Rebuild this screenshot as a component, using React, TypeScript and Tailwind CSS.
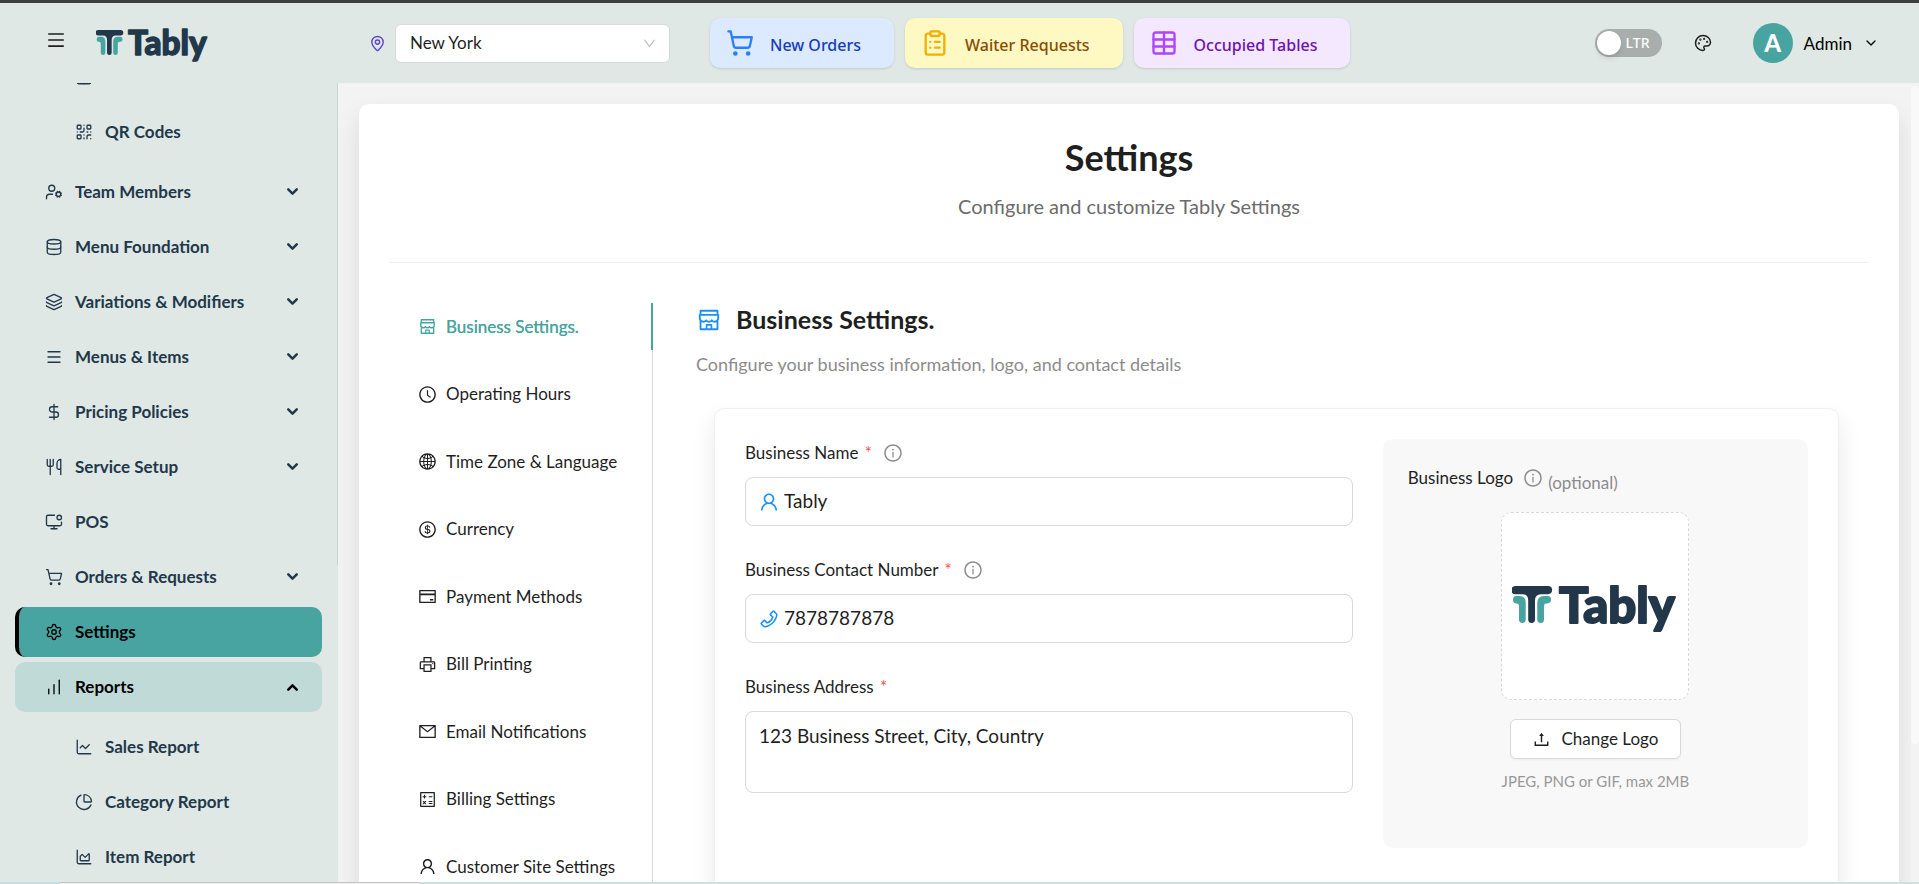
import React from "react";
import {
  ChartArea,
  ChartLine,
  ChartNoAxesColumnIncreasing,
  ChartPie,
  ChevronDown,
  ChevronUp,
  ClipboardList,
  Database,
  DollarSign,
  Layers,
  MapPin,
  Menu,
  MonitorDot,
  Palette,
  QrCode,
  Settings,
  ShoppingCart,
  Table,
  UserCog,
  Utensils,
} from "lucide-react";
import {
  AiOutlineCalculator,
  AiOutlineClockCircle,
  AiOutlineCreditCard,
  AiOutlineDollarCircle,
  AiOutlineDown,
  AiOutlineGlobal,
  AiOutlineInfoCircle,
  AiOutlineMail,
  AiOutlineMenu,
  AiOutlinePhone,
  AiOutlinePrinter,
  AiOutlineShop,
  AiOutlineUpload,
  AiOutlineUser,
} from "react-icons/ai";

type IconType = React.ComponentType<any>;

function Logo({ className }: { className: string }) {
  return (
    <svg viewBox="0 -10 166 60" className={className} role="img" aria-label="Tably">
      <path
        fill="#22384a"
        d="M3.5 0H36A3.9 3.9 0 0 1 36 8.2H29Q23 8.4 23 14.5V33.6A3.4 3.4 0 0 1 16.2 33.6V14.5Q16.2 8.4 10.5 8.2H3.5A3.9 3.9 0 0 1 3.5 0Z"
      />
      <path
        fill="#48a4a1"
        d="M4 10H7.5Q13.7 10 13.7 17V33.6A3.35 3.35 0 0 1 7 33.6V20Q7 17.6 4.5 17.6Q1 17.6 1 13.8Q1 10 4 10Z"
      />
      <path
        fill="#48a4a1"
        d="M36 10H32Q25.3 10 25.3 17V33.6A3.35 3.35 0 0 0 32 33.6V20Q32 17.6 34.5 17.6Q39 17.6 39 13.8Q39 10 36 10Z"
      />
      <text
        x="47"
        y="37"
        fontSize="49"
        fill="#22384a"
        stroke="#22384a"
        strokeWidth="2"
        strokeLinejoin="round"
        className="font-[family-name:Lato,sans-serif] font-black"
      >
        Tably
      </text>
    </svg>
  );
}

function QuickLink({ icon: Icon, label, tone, iconTone }: { icon: IconType; label: string; tone: string; iconTone: string }) {
  return (
    <button type="button" className={`flex h-[50px] items-center gap-4 rounded-[10px] pr-[33px] pl-4 shadow-sm ${tone}`}>
      <Icon size={28} strokeWidth={2} className={iconTone} />
      <span className="pt-[3px] font-[family-name:Noto_Sans,sans-serif] text-base font-medium whitespace-nowrap">{label}</span>
    </button>
  );
}

function Header() {
  return (
    <header className="relative z-10 flex h-[80px] shrink-0 items-center bg-[#dfe8e5] pr-[43px] pl-[46px]">
      <div className="flex w-[323px] items-center gap-[30px]">
        <button type="button" aria-label="Toggle menu" className="pb-[6px] text-[#1f1f1f]">
          <AiOutlineMenu size={20} />
        </button>
        <Logo className="h-[41px] w-[113px]" />
      </div>
      <label className="flex items-center gap-[9px]">
        <MapPin size={17} strokeWidth={2} className="text-[#5b45c9]" />
        <span className="grid items-center">
          <select
            aria-label="Branch"
            className="col-start-1 row-start-1 h-[39px] w-[275px] appearance-none rounded-md border border-[#d9d9d9] bg-white px-[14px] text-[17px] text-[#1f1f1f]"
          >
            <option>New York</option>
          </select>
          <AiOutlineDown size={15} className="pointer-events-none col-start-1 row-start-1 mr-[13px] justify-self-end text-[#bfbfbf]" />
        </span>
      </label>
      <nav className="ml-10 flex gap-[11px]">
        <QuickLink icon={ShoppingCart} label="New Orders" tone="bg-blue-100 text-blue-800" iconTone="text-blue-500" />
        <QuickLink icon={ClipboardList} label="Waiter Requests" tone="bg-yellow-100 text-yellow-800" iconTone="text-yellow-500" />
        <QuickLink icon={Table} label="Occupied Tables" tone="bg-purple-100 text-purple-800" iconTone="text-purple-500" />
      </nav>
      <div className="ml-auto flex items-center">
        <button type="button" role="switch" aria-checked="false" className="flex h-7 w-[67px] items-center gap-[5px] rounded-full bg-[#a7aeac] pl-[2px] text-white">
          <span className="size-6 rounded-full bg-white shadow-md" />
          <span className="font-[family-name:Noto_Sans,sans-serif] text-sm font-medium">LTR</span>
        </button>
        <button type="button" aria-label="Theme" className="ml-8 text-[#1f1f1f]">
          <Palette size={18} strokeWidth={2} />
        </button>
        <button type="button" className="ml-[41px] flex items-center gap-[11px] text-[17px] text-black">
          <span className="grid size-10 place-items-center rounded-full bg-[#48a4a1] text-[24px] font-black text-white">A</span>
          <span className="pt-[2px]">Admin</span>
          <ChevronDown size={16} strokeWidth={2} className="-mr-[3px]" />
        </button>
      </div>
    </header>
  );
}

function SideItem({ icon: Icon, label, expand, state = "", sub = false }: { icon: IconType; label: string; expand?: "up" | "down"; state?: "" | "active" | "open"; sub?: boolean }) {
  const look =
    state === "active"
      ? "border-black bg-[#48a4a1] text-black"
      : state === "open"
        ? "bg-[#c0dad7] text-black"
        : "border-transparent text-[#22384a]";
  const edge = state === "open" ? "pl-[30px]" : "border-l-4 pl-[26px]";
  return (
    <li>
      <a href="#" className={`flex h-[50px] items-center gap-3 rounded-[10px] pr-[21px] ${sub ? "pl-[60px]" : edge} ${look}`}>
        <Icon size={18} strokeWidth={1.75} />
        <span className="text-[17px] font-bold whitespace-nowrap">{label}</span>
        {expand === "down" && <ChevronDown size={17} strokeWidth={3.5} className="mb-[2px] ml-auto" />}
        {expand === "up" && <ChevronUp size={17} strokeWidth={3.5} className="ml-auto" />}
      </a>
    </li>
  );
}

function Sidebar() {
  return (
    <aside className="relative w-[338px] shrink-0 overflow-hidden bg-[#dfe8e5] pr-4 pl-[15px]">
      <ul className="-mt-[31px] flex flex-col gap-[5px]">
        <li>
          <ul className="flex flex-col gap-[5px] pb-[5px]">
            <SideItem sub icon={Table} label="Tables" />
            <SideItem sub icon={QrCode} label="QR Codes" />
          </ul>
        </li>
        <SideItem icon={UserCog} label="Team Members" expand="down" />
        <SideItem icon={Database} label="Menu Foundation" expand="down" />
        <SideItem icon={Layers} label="Variations &amp; Modifiers" expand="down" />
        <SideItem icon={Menu} label="Menus &amp; Items" expand="down" />
        <SideItem icon={DollarSign} label="Pricing Policies" expand="down" />
        <SideItem icon={Utensils} label="Service Setup" expand="down" />
        <SideItem icon={MonitorDot} label="POS" />
        <SideItem icon={ShoppingCart} label="Orders &amp; Requests" expand="down" />
        <SideItem icon={Settings} label="Settings" state="active" />
        <SideItem icon={ChartNoAxesColumnIncreasing} label="Reports" state="open" expand="up" />
        <li>
          <ul className="flex flex-col gap-[5px] pt-[5px]">
            <SideItem sub icon={ChartLine} label="Sales Report" />
            <SideItem sub icon={ChartPie} label="Category Report" />
            <SideItem sub icon={ChartArea} label="Item Report" />
          </ul>
        </li>
      </ul>
      <span className="absolute top-0 right-0 h-[482px] w-px bg-[#cdd5d3]" />
    </aside>
  );
}

const tabs: { icon: IconType; label: string }[] = [
  { icon: AiOutlineShop, label: "Business Settings." },
  { icon: AiOutlineClockCircle, label: "Operating Hours" },
  { icon: AiOutlineGlobal, label: "Time Zone & Language" },
  { icon: AiOutlineDollarCircle, label: "Currency" },
  { icon: AiOutlineCreditCard, label: "Payment Methods" },
  { icon: AiOutlinePrinter, label: "Bill Printing" },
  { icon: AiOutlineMail, label: "Email Notifications" },
  { icon: AiOutlineCalculator, label: "Billing Settings" },
  { icon: AiOutlineUser, label: "Customer Site Settings" },
];

function SettingsTabs() {
  return (
    <nav className="w-[264px] shrink-0 border-r border-[#d9d9d9]">
      <ul className="-mr-px flex h-[587px] flex-col justify-between">
        {tabs.map(({ icon: Icon, label }, i) => (
          <li key={label}>
            <a
              href="#"
              className={`flex h-[47px] items-center gap-[9px] border-r-2 pl-[29px] text-[17px] whitespace-nowrap ${
                i === 0 ? "border-[#48a4a1] text-[#48a4a1] [text-shadow:0_0_0.25px_currentColor]" : "border-transparent text-[#1f1f1f]"
              }`}
            >
              <Icon size={19} />
              {label}
            </a>
          </li>
        ))}
      </ul>
    </nav>
  );
}

function FieldLabel({ htmlFor, text, info }: { htmlFor: string; text: string; info?: boolean }) {
  return (
    <div className="flex h-7 items-center">
      <label htmlFor={htmlFor} className="text-[17px] text-[#1f1f1f]">
        {text} <span className="ml-[2px] text-[#ff4d4f]">*</span>
      </label>
      {info && <AiOutlineInfoCircle size={20} className="ml-[11px] text-[#8c8c8c]" />}
    </div>
  );
}

function TextField({ id, text, value, icon: Icon }: { id: string; text: string; value: string; icon: IconType }) {
  return (
    <div className="flex flex-col gap-[10px]">
      <FieldLabel htmlFor={id} text={text} info />
      <div className="flex h-[49px] items-center gap-1 rounded-lg border border-[#d9d9d9] bg-white px-3">
        <Icon size={22} className="shrink-0 text-[#1890ff]" />
        <input id={id} defaultValue={value} className="min-w-0 flex-1 text-[19px] text-[#1f1f1f] outline-none" />
      </div>
    </div>
  );
}

function BusinessForm() {
  return (
    <form className="mt-[30px] mr-4 ml-[18px] flex min-h-[520px] gap-[30px] rounded-[10px] border border-[#f0f0f0] bg-white p-[30px] shadow-[0_12px_24px_rgba(0,0,0,0.09)]">
      <div className="flex min-w-0 flex-1 flex-col gap-[30px]">
        <TextField id="business-name" text="Business Name" value="Tably" icon={AiOutlineUser} />
        <TextField id="business-phone" text="Business Contact Number" value="7878787878" icon={AiOutlinePhone} />
        <div className="flex flex-col gap-[10px]">
          <FieldLabel htmlFor="business-address" text="Business Address" />
          <textarea
            id="business-address"
            defaultValue="123 Business Street, City, Country"
            className="h-[82px] resize-none rounded-lg border border-[#d9d9d9] bg-white px-[13px] py-[9px] text-[19px] leading-[30px] text-[#1f1f1f] outline-none"
          />
        </div>
      </div>
      <section className="flex h-[409px] w-2/5 max-w-[426px] shrink-0 flex-col items-center rounded-[10px] bg-[#f8f8f8] p-[25px]">
        <div className="flex h-7 w-full items-center">
          <span className="text-[17px] text-[#1f1f1f]">Business Logo</span>
          <AiOutlineInfoCircle size={20} className="ml-[10px] text-[#8c8c8c]" />
          <span className="ml-[5px] pt-[9px] text-[17px] text-[#8c8c8c]">(optional)</span>
        </div>
        <div className="mt-5 grid size-[188px] place-items-center rounded-[10px] border border-dashed border-[#d9d9d9] bg-white">
          <Logo className="w-[166px]" />
        </div>
        <button type="button" className="mt-[19px] flex h-10 w-[171px] items-center justify-center gap-[10px] rounded-md border border-[#d9d9d9] bg-white text-[17px] text-[#1f1f1f] shadow-xs">
          <AiOutlineUpload size={19} />
          Change Logo
        </button>
        <p className="mt-3 text-[15px] leading-5 whitespace-nowrap text-[#999999]">JPEG, PNG or GIF, max 2MB</p>
      </section>
    </form>
  );
}

export default function App() {
  return (
    <div className="flex h-screen flex-col overflow-hidden bg-[#f3f3f3] font-[family-name:Lato,sans-serif]">
      <div className="h-[3px] shrink-0 bg-[#3c403f]" />
      <Header />
      <div className="flex min-h-0 flex-1">
        <Sidebar />
        <main className="min-w-0 flex-1 overflow-hidden pt-[21px] pr-3 pl-[21px]">
          <div className="rounded-[10px] bg-white px-[30px] pb-10 shadow-[0_12px_24px_rgba(0,0,0,0.10)]">
            <div className="flex flex-col items-center gap-[11px] border-b border-[#f0f0f0] pt-[30px] pb-[41px]">
              <h1 className="text-[36px] leading-[46px] font-bold text-[#1f1f1f]">Settings</h1>
              <p className="text-[20px] leading-[30px] text-[#6b6b6b]">Configure and customize Tably Settings</p>
            </div>
            <div className="flex pt-10">
              <SettingsTabs />
              <section className="min-w-0 flex-1 pr-[14px] pl-[43px]">
                <h2 className="flex h-[34px] items-center gap-[14px] text-[25px] font-bold text-[#1f1f1f]">
                  <AiOutlineShop size={26} className="text-[#1890ff]" />
                  Business Settings.
                </h2>
                <p className="mt-[13px] text-[18px] leading-7 text-[#8c8c8c]">Configure your business information, logo, and contact details</p>
                <BusinessForm />
              </section>
            </div>
          </div>
        </main>
        <div className="w-2 shrink-0 pt-[3px]">
          <div className="h-[658px] rounded-full bg-[#f9f9f9]" />
        </div>
      </div>
      <div className="flex h-[2px] shrink-0">
        <div className="w-[60px] bg-[#cbdde5]" />
        <div className="w-[359px] border-t border-[#c4c4c4] bg-[#eeeeee]" />
        <div className="flex-1 bg-[#c9e2de]" />
      </div>
    </div>
  );
}
